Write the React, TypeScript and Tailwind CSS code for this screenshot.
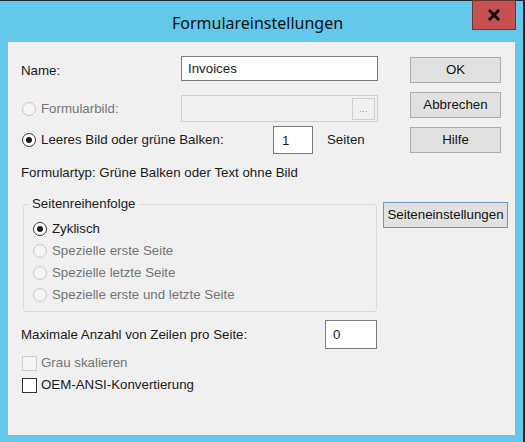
import React from 'react';

const ui = { fontFamily: '"Liberation Sans", Arial, sans-serif' };

function Radio({ checked = false, disabled = false }: { checked?: boolean; disabled?: boolean }) {
  return (
    <span
      className={
        'flex h-[14px] w-[14px] shrink-0 items-center justify-center rounded-full border ' +
        (disabled ? 'border-[#c6c6c6] bg-[#f4f4f4]' : 'border-[#333333] bg-white')
      }
    >
      {checked && <span className="h-[6px] w-[6px] rounded-full bg-[#1a1a1a]" />}
    </span>
  );
}

function Check({ disabled = false }: { disabled?: boolean }) {
  return (
    <span
      className={
        'block h-[15px] w-[15px] shrink-0 border ' +
        (disabled ? 'border-[#cccccc] bg-[#f4f4f4]' : 'border-[#333333] bg-white')
      }
    />
  );
}

function Btn({ children, focused = false, className = '' }: { children: React.ReactNode; focused?: boolean; className?: string }) {
  return (
    <div
      className={
        'flex items-center justify-center border bg-[#e1e1e1] text-[#111] ' +
        (focused ? 'border-[#6b96c6] ' : 'border-[#adadad] ') +
        className
      }
    >
      {children}
    </div>
  );
}

export default function App() {
  return (
    <div className="relative h-[442px] w-[525px] border-r-2 border-t border-[#1f2a30] bg-[#63c8ea]" style={ui}>
      {/* title bar */}
      <div className="relative flex h-[41px] items-center justify-center pr-[8px]">
        <span className="pt-[3px] text-[16px] text-[#111]" style={{ fontFamily: '"Noto Sans", "Open Sans", sans-serif' }}>
          Formulareinstellungen
        </span>
        <div className="absolute right-[7px] top-[-1px] flex h-[30px] w-[44px] items-center justify-center border border-[#6b3333] bg-[#c75050]">
          <svg width="14" height="12" viewBox="0 0 14 12">
            <path d="M2 1 L12 11 M12 1 L2 11" stroke="#0d0d0d" strokeWidth="3" />
          </svg>
        </div>
      </div>

      {/* client area */}
      <div className="ml-[8px] flex h-[393px] w-[507px] bg-[#f0f0f0] text-[13.3px] text-[#1a1a1a]">
        {/* left column */}
        <div className="flex w-[375px] flex-col pl-[13px] pt-[14px]">
          <div className="flex h-[25px] items-center">
            <span className="w-[160px] pt-[5px]">Name:</span>
            <div className="flex h-[25px] w-[197px] items-center border border-[#7a7a7a] bg-white pl-[6px] pt-[1px]">Invoices</div>
          </div>

          <div className="mt-[14px] flex h-[27px] items-center">
            <div className="flex w-[160px] items-center gap-[5px] pl-[1px] text-[#747474]">
              <Radio disabled />
              <span>Formularbild:</span>
            </div>
            <div className="flex h-[27px] w-[197px] items-center justify-end border border-[#cfcfcf] bg-[#f0f0f0] pr-[2px]">
              <div className="flex h-[22px] w-[23px] items-center justify-center border border-[#cfcfcf] text-[10px] leading-none text-[#9a9a9a]">
                ...
              </div>
            </div>
          </div>

          <div className="mt-[4px] flex h-[28px] items-center">
            <div className="flex w-[252px] items-center gap-[5px] pl-[1px]">
              <Radio checked />
              <span>Leeres Bild oder grüne Balken:</span>
            </div>
            <div className="flex h-[28px] w-[40px] items-start border border-[#7a7a7a] bg-white pl-[8px] pt-[4px]">1</div>
            <span className="ml-[14px]">Seiten</span>
          </div>

          <div className="mt-[11px] h-[16px] leading-[16px]">Formulartyp: Grüne Balken oder Text ohne Bild</div>

          <fieldset className="ml-[2px] mt-[15px] w-[354px] rounded-[3px] border border-[#d9d9d9] pb-[5px]">
            <legend className="ml-[5px] px-[3px] leading-[16px]">Seitenreihenfolge</legend>
            <div className="pl-[9px] pt-[6px]">
              <div className="flex h-[22px] items-center gap-[5px]">
                <Radio checked />
                <span>Zyklisch</span>
              </div>
              <div className="flex h-[22px] items-center gap-[5px] text-[#747474]">
                <Radio disabled />
                <span>Spezielle erste Seite</span>
              </div>
              <div className="flex h-[22px] items-center gap-[5px] text-[#747474]">
                <Radio disabled />
                <span>Spezielle letzte Seite</span>
              </div>
              <div className="flex h-[22px] items-center gap-[5px] text-[#747474]">
                <Radio disabled />
                <span>Spezielle erste und letzte Seite</span>
              </div>
            </div>
          </fieldset>

          <div className="mt-[8px] flex h-[29px] items-center">
            <span className="w-[304px]">Maximale Anzahl von Zeilen pro Seite:</span>
            <div className="flex h-[29px] w-[52px] items-start border border-[#7a7a7a] bg-white pl-[7px] pt-[4px]">0</div>
          </div>

          <div className="mt-[3px] flex h-[22px] items-center gap-[4px] pl-[1px] text-[#747474]">
            <Check disabled />
            <span>Grau skalieren</span>
          </div>
          <div className="flex h-[22px] items-center gap-[4px] pl-[1px]">
            <Check />
            <span>OEM-ANSI-Konvertierung</span>
          </div>
        </div>

        {/* right column */}
        <div className="flex w-[125px] flex-col pt-[15px]">
          <Btn className="ml-[27px] h-[26px] w-[91px]">OK</Btn>
          <Btn className="ml-[27px] mt-[9px] h-[26px] w-[91px]">Abbrechen</Btn>
          <Btn className="ml-[27px] mt-[9px] h-[26px] w-[91px]">Hilfe</Btn>
          <Btn focused className="mt-[49px] h-[26px] w-[125px]">Seiteneinstellungen</Btn>
        </div>
      </div>
    </div>
  );
}
